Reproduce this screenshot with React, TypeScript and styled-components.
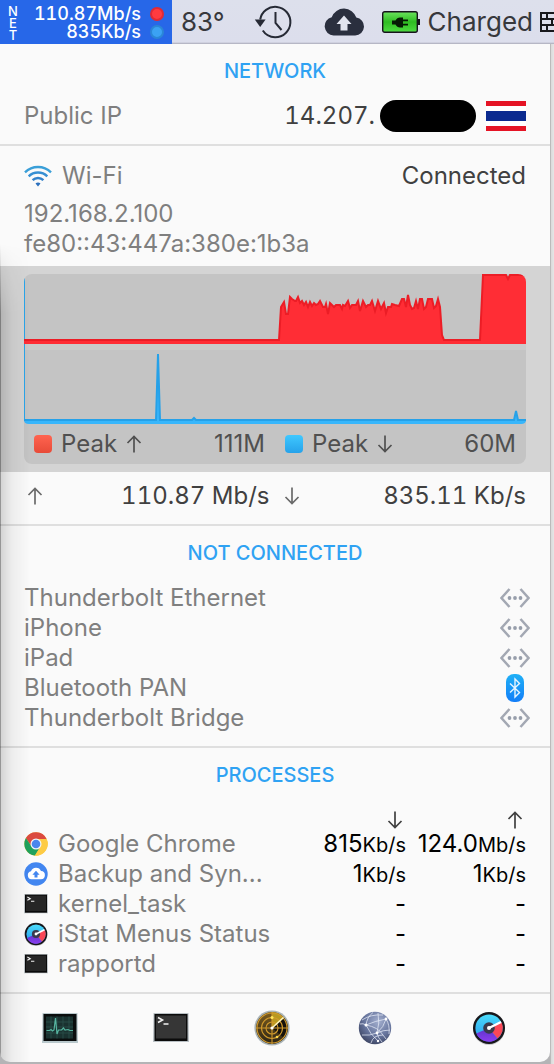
import React from 'react';
import styled, { createGlobalStyle } from 'styled-components';

const GlobalStyle = createGlobalStyle`
  *, *::before, *::after { box-sizing: border-box; }
  html { background: #b4b4b6; }
  body {
    margin: 0;
    font-family: Inter, "Noto Sans", sans-serif;
    font-size: 24px;
    line-height: 30px;
    color: #404040;
  }
  h2, p, ul, dl, dd, dt { margin: 0; padding: 0; font-weight: 400; }
  svg { display: block; flex: none; }
`;

/* ---------- menu bar ---------- */

const MenuBar = styled.header`
  display: flex;
  align-items: center;
  height: 44px;
  overflow: hidden;
  background: linear-gradient(#dde0ec, #dcdeec 42px, #a9aab8 44px);
  color: #37383c;
  font-size: 26px;
  white-space: nowrap;
`;

const NetItem = styled.button`
  display: flex;
  align-items: center;
  flex: none;
  width: 172px;
  height: 44px;
  padding: 2px 8px 0 6px;
  border: 0;
  background: #2767e8;
  color: #fff;
  font: 500 18px/18px Inter, sans-serif;
  font-variant-numeric: tabular-nums;
`;

const NetLabel = styled.span`
  display: flex;
  flex-direction: column;
  width: 14px;
  font-size: 13px;
  line-height: 12px;
  text-align: center;
`;

const NetRates = styled.span`
  flex: 1;
  text-align: right;
`;

const NetRate = styled.span`
  display: flex;
  align-items: center;
  justify-content: flex-end;
  gap: 9px;
`;

const Dot = styled.span<{ $fill: string; $edge: string }>`
  width: 14px;
  height: 14px;
  border-radius: 50%;
  border: 2px solid ${(p) => p.$edge};
  background: ${(p) => p.$fill};
`;

const MenuItem = styled.button<{ $before: number }>`
  display: flex;
  align-items: center;
  flex: none;
  gap: 8px;
  margin-left: ${(p) => p.$before}px;
  padding: 0;
  border: 0;
  background: none;
  color: inherit;
  font: 400 26px/44px Inter, sans-serif;
`;

/* ---------- panel ---------- */

const Desktop = styled.main`
  padding: 0 4px 2px 0;
  background: linear-gradient(90deg, #b4b4b6 0, #b4b4b6 calc(100% - 4px), #9c9c9c calc(100% - 4px), #dadada calc(100% - 3px), #e6e6e6 100%);
`;

const Panel = styled.article`
  position: relative;
  overflow: hidden;
  background: #fafafa;
  border-radius: 0 0 10px 10px;

  &::after {
    content: '';
    position: absolute;
    inset: 200px auto 0 0;
    width: 30px;
    pointer-events: none;
    background: linear-gradient(90deg, rgba(0, 0, 0, 0.4) 1px, rgba(0, 0, 0, 0.15) 1px, rgba(0, 0, 0, 0.05) 12px, transparent);
    mask-image: linear-gradient(transparent, #000 70px);
  }
`;

const Section = styled.section`
  padding: 0 24px 13px;
  border-bottom: 2px solid #dfdfdf;
`;

const Title = styled.h2`
  height: 57px;
  color: #2fa2f3;
  font-size: 20px;
  font-weight: 500;
  line-height: 54px;
  text-align: center;
`;

const Row = styled.div`
  display: flex;
  align-items: center;
  height: 30px;
`;

const Muted = styled.span`
  color: #7f7f7f;
`;

const Push = styled.span`
  margin-left: auto;
`;

const PublicAddress = styled(Push)`
  font-variant-numeric: tabular-nums;
`;

const Redaction = styled.span`
  width: 96px;
  height: 32px;
  margin: 0 10px 0 5px;
  border-radius: 16px;
  background: #000;
`;

const Wireless = styled.section`
  padding: 15px 24px 7px;
`;

const WirelessHead = styled(Row)`
  gap: 10px;
  margin-bottom: 8px;
`;

const Address = styled.p`
  color: #7f7f7f;
`;

const GraphArea = styled.section`
  padding: 8px 24px;
  background: #d4d4d4;
`;

const GraphCard = styled.div`
  overflow: hidden;
  border-radius: 8px;
  background: #c4c4c4;
`;

const Legend = styled.div`
  display: grid;
  grid-template-columns: 1fr 1fr;
  gap: 20px;
  height: 40px;
  padding: 0 10px;
  align-items: center;
  color: #505050;
`;

const LegendItem = styled.div`
  display: flex;
  align-items: center;
  gap: 9px;
`;

const Swatch = styled.span<{ $from: string; $to: string }>`
  width: 18px;
  height: 18px;
  border-radius: 4px;
  background: linear-gradient(${(p) => p.$from}, ${(p) => p.$to});
`;

const Speeds = styled.section`
  display: grid;
  grid-template-columns: 1fr 1fr;
  gap: 14px;
  height: 54px;
  padding: 0 24px 4px 27px;
  align-items: center;
  border-bottom: 2px solid #dfdfdf;
  font-variant-numeric: tabular-nums;
`;

const Speed = styled.div`
  display: flex;
  align-items: center;
  justify-content: space-between;
`;

const DeviceList = styled.ul`
  margin-right: -4px;
  list-style: none;
`;

const Device = styled.li`
  display: flex;
  align-items: center;
  justify-content: space-between;
  height: 30px;
  color: #7f7f7f;
`;

const ProcessTable = styled.table`
  width: 100%;
  border-collapse: collapse;
  table-layout: fixed;
  line-height: 28px;

  th, td { padding: 0; height: 30px; font-weight: 400; }
  thead th { height: 24px; line-height: 0; }
  thead svg { margin: 6px 3px 0 auto; }
`;

const NameHead = styled.th`
  width: auto;
`;

const RateHead = styled.th`
  width: 120px;
`;

const NameCell = styled.th`
  color: #7f7f7f;
  text-align: left;

  & > span { display: flex; align-items: center; gap: 10px; white-space: nowrap; }
`;

const RateCell = styled.td`
  color: #000;
  text-align: right;
  white-space: nowrap;
`;

const Unit = styled.small`
  font-size: 20px;
  line-height: 20px;
`;

const Tools = styled.footer`
  display: grid;
  grid-template-columns: 120fr 102fr 100fr 106fr 122fr;
  justify-items: center;
  align-items: center;
  height: 68px;
`;

const ToolButton = styled.button`
  padding: 0;
  border: 0;
  background: none;
`;

/* ---------- drawings ---------- */

const Arrow = ({ up, color = '#505050' }: { up?: boolean; color?: string }) => (
  <svg width="16" height="18" viewBox="0 0 16 18" fill="none" stroke={color} strokeWidth="1.7" aria-hidden="true">
    <path d={up ? 'M8 17.5V1.5M1.5 8 8 1.5 14.500 8' : 'M8 .5v16M1.500 10 8 16.500 14.500 10'} />
  </svg>
);

const HistoryIcon = () => (
  <svg width="38" height="34" viewBox="0 0 38 34" fill="none" stroke="#262a35" strokeWidth="2" aria-hidden="true">
    <path d="M6.200 14.500A15.200 15.200 0 1 1 21 32.200Q13 32 8.800 25.500" />
    <path d="M21.500 7v11l6 7" />
    <path d="M.8 14.500h10.800L6.200 22z" fill="#262a35" stroke="none" />
  </svg>
);

const CloudIcon = () => (
  <svg width="40" height="28" viewBox="0 0 40 28" aria-hidden="true">
    <path fill="#2a2f3e" d="M9.500 27.500A9.300 9.300 0 0 1 7.700 9.200 13 13 0 0 1 32.300 9.600 9 9 0 0 1 31.200 27.500z" />
    <path fill="#e2e5ef" d="M20 7.500 27.500 16H23.500v6.500h-7V16h-4z" />
  </svg>
);

const BatteryIcon = () => (
  <svg width="38" height="22" viewBox="0 0 38 22" aria-hidden="true">
    <defs>
      <linearGradient id="charge" x2="0" y2="1">
        <stop offset="0" stopColor="#6be35e" />
        <stop offset=".5" stopColor="#2fbd22" />
        <stop offset="1" stopColor="#4fdc42" />
      </linearGradient>
    </defs>
    <rect x=".7" y=".7" width="34.600" height="20.600" rx="2" fill="url(#charge)" stroke="#17141c" strokeWidth="1.400" />
    <path d="M36 8h2v6h-2z" fill="#17141c" />
    <path d="M10 9.500h3.500c1-2 2.500-3 4.500-3h3v2h5v1.700h-5v2.600h5v1.700h-5v2h-3c-2 0-3.500-1-4.500-3H10z" fill="#061a05" />
  </svg>
);

const BrickIcon = () => (
  <svg width="26" height="20" viewBox="0 0 26 20" fill="none" stroke="#17181c" strokeWidth="2" aria-hidden="true">
    <path d="M1 1h24v18H1zM1 7h24M1 13h24M7 1v6M16 1v6M12 7v6M21 7v6M7 13v6M16 13v6" />
  </svg>
);

const FlagIcon = () => (
  <svg width="40" height="30" viewBox="0 0 40 30" role="img" aria-label="Thailand">
    <path fill="#fff" d="M0 0h40v30H0z" />
    <path fill="#e51425" d="M0 0h40v5H0zM0 25h40v5H0z" />
    <path fill="#0b2a8f" d="M0 10h40v10H0z" />
  </svg>
);

const WifiIcon = () => (
  <svg width="28" height="22" viewBox="0 0 28 22" fill="none" strokeWidth="2.400" aria-hidden="true">
    <path stroke="#3a9fd8" d="M1 7.300a18.500 18.500 0 0 1 26 0" />
    <path stroke="#378fd3" d="M4.700 11.300a13.200 13.200 0 0 1 18.600 0" />
    <path stroke="#3382cb" d="M8.600 15.200a7.700 7.700 0 0 1 10.800 0" />
    <path fill="#2c70bd" d="M11.500 18.500a3.800 3.800 0 0 1 5 0L14 21.500z" />
  </svg>
);

const LinkIcon = () => (
  <svg width="30" height="20" viewBox="0 0 30 20" aria-hidden="true">
    <path d="M9.500 1 1.500 10l8 9M20.500 1l8 9-8 9" fill="none" stroke="#a3a8b3" strokeWidth="2.500" />
    <g fill="#979eab">
      <circle cx="9.500" cy="10" r="1.900" />
      <circle cx="15" cy="10" r="1.900" />
      <circle cx="20.500" cy="10" r="1.900" />
    </g>
  </svg>
);

const BluetoothIcon = () => (
  <svg width="30" height="28" viewBox="0 0 30 28" aria-hidden="true">
    <defs>
      <linearGradient id="bt" x2="0" y2="1">
        <stop offset="0" stopColor="#1fb0f6" />
        <stop offset="1" stopColor="#137ef8" />
      </linearGradient>
    </defs>
    <rect x="6" width="18" height="28" rx="8" fill="url(#bt)" />
    <path d="M10 9.500l9.500 9L15 23V5l4.500 4.500-9.500 9" fill="none" stroke="#e6f4ff" strokeWidth="1.400" />
  </svg>
);

const ChromeIcon = () => (
  <svg width="24" height="24" viewBox="0 0 24 24" aria-hidden="true">
    <circle cx="12" cy="12" r="11.700" fill="#fdcb45" />
    <path fill="#db4a40" d="M1.900 6.100A11.700 11.700 0 0 1 22.600 6.900H12L7.600 14.600z" />
    <path fill="#1fa15c" d="M1.900 6.100A11.700 11.700 0 0 0 11 23.600L16.500 14.600 12 17.100 7.600 14.600z" />
    <path fill="#fdcb45" d="M22.600 6.900H12l4.500 7.700L11 23.600A11.700 11.700 0 0 0 22.600 6.900z" />
    <circle cx="12" cy="12" r="5.500" fill="#f3f5f8" />
    <circle cx="12" cy="12" r="4.300" fill="#4a86ee" />
  </svg>
);

const BackupIcon = () => (
  <svg width="24" height="24" viewBox="0 0 24 24" aria-hidden="true">
    <circle cx="12" cy="12" r="11.700" fill="#4286f0" />
    <path fill="#fff" d="M7.500 17.200A4 4 0 0 1 7 9.300a5.300 5.300 0 0 1 10-.2 4 4 0 0 1-.3 8.100z" />
    <path fill="#4286f0" d="m12 8.800 3.600 4h-2.100v2.700h-3v-2.700H8.400z" />
  </svg>
);

const TerminalIcon = ({ large }: { large?: boolean }) => (
  <svg width={large ? 36 : 24} height={large ? 30 : 20} viewBox="0 0 36 30" aria-hidden="true">
    <path fill="#b9c0c4" d="M.5 0h35l.5 29H0z" />
    <path fill="#0b0b0b" d="M1.500 1h33v27h-33z" />
    <path fill={large ? '#363636' : '#262626'} d="M3 2.500h30v23H3z" />
    <path d="m5 4.500 4.500 2.500L5 9.500M10.500 11h5" fill="none" stroke="#f2f2f2" strokeWidth="1.600" />
  </svg>
);

const GaugeIcon = ({ size }: { size: number }) => (
  <svg width={size} height={size} viewBox="0 0 34 34" aria-hidden="true">
    <defs>
      <linearGradient id="gaugeSky" x2="0" y2="1">
        <stop offset="0" stopColor="#4cdcfa" />
        <stop offset="1" stopColor="#2297ee" />
      </linearGradient>
      <linearGradient id="gaugeViolet" x2="0" y2="1">
        <stop offset="0" stopColor="#5b35c9" />
        <stop offset="1" stopColor="#8c3df0" />
      </linearGradient>
    </defs>
    <circle cx="17" cy="18" r="16" fill="#c9c9cc" />
    <circle cx="17" cy="17" r="16" fill="#17171b" />
    <circle cx="17" cy="17" r="13.600" fill="url(#gaugeSky)" />
    <path fill="url(#gaugeViolet)" d="M17 17 4.300 22.500A13.600 13.600 0 0 0 25.500 27.600z" />
    <path fill="#fb4756" d="m17 17 12.700-5.500a13.600 13.600 0 0 1-4.200 16.100z" />
    <circle cx="17" cy="17" r="5.800" fill="#3a3a4c" />
    <path d="M17 17 29 11" stroke="#fff" strokeWidth="2.200" />
    <circle cx="17" cy="17" r="2" fill="#fff" />
  </svg>
);

const ActivityIcon = () => (
  <svg width="36" height="30" viewBox="0 0 36 30" aria-hidden="true">
    <path fill="#b9c8cc" d="M.5 0h35l.5 30H0z" />
    <path fill="#0a0d0d" d="M1.500 1h33v27h-33z" />
    <path fill="#1a3230" d="M4 3.500h27v22H4z" />
    <path d="M4 9h27M4 14h27M4 20h27M9 3.500v22M15 3.500v22M21 3.500v22M27 3.500v22" stroke="#2c514c" strokeWidth=".8" />
    <path d="M4.500 17.500h3l1.500-1 1.500 1.500 1.500-1L13.500 5l1.500 16 1.500-4h3l2-2 1.500 2 3-.5 2 1h3" fill="none" stroke="#56b5a0" strokeWidth="1.200" />
  </svg>
);

const RadarIcon = () => (
  <svg width="36" height="36" viewBox="0 0 36 36" aria-hidden="true">
    <defs>
      <linearGradient id="radar" x2="0" y2="1">
        <stop offset="0" stopColor="#7c5c1d" />
        <stop offset="1" stopColor="#2a2417" />
      </linearGradient>
    </defs>
    <circle cx="18" cy="18" r="17.600" fill="#a9b3b6" />
    <circle cx="18" cy="18" r="16" fill="url(#radar)" />
    <path fill="#15120c" d="m18 18 12-10a16 16 0 0 1 0 20z" />
    <path fill="#b8991f" d="M18 18V2a16 16 0 0 1 12 6z" />
    <g fill="none" stroke="#d19a2c" strokeWidth="1.100">
      <circle cx="18" cy="18" r="15" />
      <circle cx="18" cy="18" r="10.500" />
      <circle cx="18" cy="18" r="6" />
      <path d="M18 2v32M2 18h32" />
    </g>
    <path d="m18 18 11.500-10.500" stroke="#fff6c0" strokeWidth="1.600" />
    <circle cx="18" cy="18" r="1.600" fill="#fff" />
    <circle cx="18" cy="7.500" r="1.500" fill="#ffe65a" />
    <circle cx="23" cy="27" r="1.300" fill="#ffd84a" />
  </svg>
);

const GlobeIcon = () => (
  <svg width="34" height="34" viewBox="0 0 34 34" aria-hidden="true">
    <defs>
      <radialGradient id="globe" cx=".6" cy=".3" r=".8">
        <stop offset="0" stopColor="#a3afcf" />
        <stop offset=".55" stopColor="#66749c" />
        <stop offset="1" stopColor="#353c58" />
      </radialGradient>
    </defs>
    <circle cx="17" cy="17" r="16.200" fill="url(#globe)" />
    <path
      d="M4 9q9-6 21-5M8 14q9-4 20-6M8 14q-3-2-6-1M8 14q4 9 12 16M8 14Q9 6 15 1.500M20 2q2 10-1 20M28 8q-2 8-9 14M28 8q4 6 3 15M19 22q6-3 13-3M19 22q-8 3-15 2M19 22q1 5 5 9M8 14q12 2 17 10M13 32q2-8 12-8l3 4"
      fill="none" stroke="#e4e9f6" strokeWidth=".9" opacity=".85"
    />
    <g fill="#fff">
      <circle cx="8" cy="14" r="1.500" />
      <circle cx="19" cy="22" r="1.400" />
      <circle cx="28" cy="8" r="1.400" />
      <circle cx="20" cy="30" r="1.200" />
    </g>
  </svg>
);

const upload =
  '0,66 255,66 257,33 260,28 262,40 264,40 266,23 268,25 271,27 272,27 274,23 276,29 278,27 280,31 282,28 284,33 286,28 288,32 290,29 292,31 294,30 296,27 299,33 301,33 302,30 304,40 306,29 310,33 312,31 316,31 318,35 319,31 321,32 324,27 326,34 328,31 332,31 334,27 336,37 339,27 342,33 344,31 346,31 348,27 351,37 354,27 357,35 360,29 362,39 364,33 367,33 368,30 371,31 375,32 378,25 380,25 382,33 384,21 386,31 388,35 390,34 392,27 394,35 396,25 398,25 400,35 402,33 404,25 406,25 408,25 410,34 412,32 414,25 416,33 418,61 420,66 456,66 459,1 482,1 484,5 486,1 502,1';
const download = '0,146 132,146 134,80 136,146 168,146 170,144 172,146 490,146 492,137 494,146 502,146';

const Graph = () => (
  <svg width="100%" height="150" viewBox="0 0 502 150" preserveAspectRatio="none" role="img" aria-label="Network activity">
    <path fill="#cacaca" d="M0 70h502v6H0z" />
    <path fill="#2aa5ea" d="M0 3h1v144H0z" />
    <polygon points={`0,70 ${upload} 502,70`} fill="#ff2d35" />
    <polyline points={upload} fill="none" stroke="#ec1d26" strokeWidth="2" />
    <path fill="#38b6fb" d="M0 146h502q0 4-5 4H5q-5 0-5-4z" />
    <polyline points={download} fill="#38b6fb" stroke="#26a1e8" strokeWidth="2" />
  </svg>
);

/* ---------- data ---------- */

const devices = [
  { name: 'Thunderbolt Ethernet', icon: <LinkIcon /> },
  { name: 'iPhone', icon: <LinkIcon /> },
  { name: 'iPad', icon: <LinkIcon /> },
  { name: 'Bluetooth PAN', icon: <BluetoothIcon /> },
  { name: 'Thunderbolt Bridge', icon: <LinkIcon /> },
];

type Rate = [string, string?];
const processes: { name: string; icon: React.ReactNode; down: Rate; up: Rate }[] = [
  { name: 'Google Chrome', icon: <ChromeIcon />, down: ['815', 'Kb/s'], up: ['124.0', 'Mb/s'] },
  { name: 'Backup and Syn...', icon: <BackupIcon />, down: ['1', 'Kb/s'], up: ['1', 'Kb/s'] },
  { name: 'kernel_task', icon: <TerminalIcon />, down: ['-'], up: ['-'] },
  { name: 'iStat Menus Status', icon: <GaugeIcon size={24} />, down: ['-'], up: ['-'] },
  { name: 'rapportd', icon: <TerminalIcon />, down: ['-'], up: ['-'] },
];

const tools = [
  { name: 'Activity Monitor', icon: <ActivityIcon /> },
  { name: 'Terminal', icon: <TerminalIcon large /> },
  { name: 'Wireless Diagnostics', icon: <RadarIcon /> },
  { name: 'Network Utility', icon: <GlobeIcon /> },
  { name: 'iStat Menus', icon: <GaugeIcon size={34} /> },
];

export default function App() {
  return (
    <>
      <GlobalStyle />
      <MenuBar>
        <NetItem>
          <NetLabel>
            <span>N</span>
            <span>E</span>
            <span>T</span>
          </NetLabel>
          <NetRates>
            <NetRate>110.87Mb/s <Dot $fill="#ff3b40" $edge="#e02a35" /></NetRate>
            <NetRate>835Kb/s <Dot $fill="#3ba2f4" $edge="#2a86d8" /></NetRate>
          </NetRates>
        </NetItem>
        <MenuItem $before={9}>83°</MenuItem>
        <MenuItem $before={29} aria-label="Time Machine"><HistoryIcon /></MenuItem>
        <MenuItem $before={32} aria-label="Cloud backup"><CloudIcon /></MenuItem>
        <MenuItem $before={18}><BatteryIcon />Charged</MenuItem>
        <MenuItem $before={7} aria-label="Firewall"><BrickIcon /></MenuItem>
      </MenuBar>

      <Desktop>
        <Panel>
          <Section>
            <Title>NETWORK</Title>
            <Row>
              <Muted>Public IP</Muted>
              <PublicAddress>14.207.</PublicAddress>
              <Redaction />
              <FlagIcon />
            </Row>
          </Section>

          <Wireless>
            <WirelessHead>
              <WifiIcon />
              <Muted>Wi-Fi</Muted>
              <Push>Connected</Push>
            </WirelessHead>
            <Address>192.168.2.100</Address>
            <Address>fe80::43:447a:380e:1b3a</Address>
          </Wireless>

          <GraphArea>
            <GraphCard>
              <Graph />
              <Legend>
                <LegendItem>
                  <Swatch $from="#ff6450" $to="#e84b38" />
                  <span>Peak</span>
                  <Arrow up />
                  <Push>111M</Push>
                </LegendItem>
                <LegendItem>
                  <Swatch $from="#3fc8ff" $to="#26a2ea" />
                  <span>Peak</span>
                  <Arrow />
                  <Push>60M</Push>
                </LegendItem>
              </Legend>
            </GraphCard>
          </GraphArea>

          <Speeds>
            <Speed><Arrow up color="#6a6a6a" /><span>110.87 Mb/s</span></Speed>
            <Speed><Arrow color="#6a6a6a" /><span>835.11 Kb/s</span></Speed>
          </Speeds>

          <Section>
            <Title>NOT CONNECTED</Title>
            <DeviceList>
              {devices.map((d) => (
                <Device key={d.name}>{d.name}{d.icon}</Device>
              ))}
            </DeviceList>
          </Section>

          <Section>
            <Title>PROCESSES</Title>
            <ProcessTable>
              <thead>
                <tr>
                  <NameHead aria-label="Process" />
                  <RateHead aria-label="Download"><Arrow color="#404040" /></RateHead>
                  <RateHead aria-label="Upload"><Arrow up color="#404040" /></RateHead>
                </tr>
              </thead>
              <tbody>
                {processes.map((p) => (
                  <tr key={p.name}>
                    <NameCell scope="row"><span>{p.icon}{p.name}</span></NameCell>
                    <RateCell>{p.down[0]}<Unit>{p.down[1]}</Unit></RateCell>
                    <RateCell>{p.up[0]}<Unit>{p.up[1]}</Unit></RateCell>
                  </tr>
                ))}
              </tbody>
            </ProcessTable>
          </Section>

          <Tools>
            {tools.map((t) => (
              <ToolButton key={t.name} aria-label={t.name}>{t.icon}</ToolButton>
            ))}
          </Tools>
        </Panel>
      </Desktop>
    </>
  );
}
